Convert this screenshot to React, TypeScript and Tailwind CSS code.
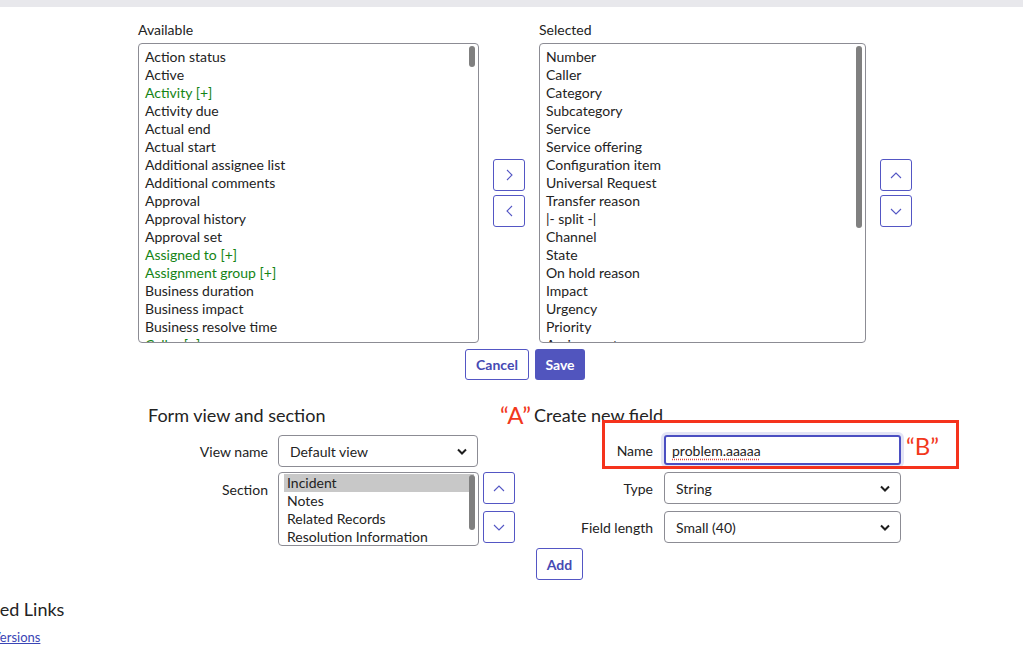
import React from "react";

type Item = { label: string; ref?: boolean };

const available: Item[] = [
  { label: "Action status" },
  { label: "Active" },
  { label: "Activity [+]", ref: true },
  { label: "Activity due" },
  { label: "Actual end" },
  { label: "Actual start" },
  { label: "Additional assignee list" },
  { label: "Additional comments" },
  { label: "Approval" },
  { label: "Approval history" },
  { label: "Approval set" },
  { label: "Assigned to [+]", ref: true },
  { label: "Assignment group [+]", ref: true },
  { label: "Business duration" },
  { label: "Business impact" },
  { label: "Business resolve time" },
  { label: "Caller [+]", ref: true },
];

const selected: Item[] = [
  { label: "Number" },
  { label: "Caller" },
  { label: "Category" },
  { label: "Subcategory" },
  { label: "Service" },
  { label: "Service offering" },
  { label: "Configuration item" },
  { label: "Universal Request" },
  { label: "Transfer reason" },
  { label: "|- split -|" },
  { label: "Channel" },
  { label: "State" },
  { label: "On hold reason" },
  { label: "Impact" },
  { label: "Urgency" },
  { label: "Priority" },
  { label: "Assignment group" },
];

const sections = ["Incident", "Notes", "Related Records", "Resolution Information"];

function Chevron({ dir }: { dir: "up" | "down" | "left" | "right" }) {
  const pts = {
    up: "1,7 6,2 11,7",
    down: "1,2 6,7 11,2",
    left: "7,1 2,6 7,11",
    right: "2,1 7,6 2,11",
  }[dir];
  const vertical = dir === "up" || dir === "down";
  return (
    <svg
      width={vertical ? 12 : 9}
      height={vertical ? 9 : 12}
      viewBox={vertical ? "0 0 12 9" : "0 0 9 12"}
      fill="none"
      stroke="#5356c4"
      strokeWidth="1.1"
    >
      <polyline points={pts} />
    </svg>
  );
}

function IconButton({ dir }: { dir: "up" | "down" | "left" | "right" }) {
  return (
    <button className="w-8 h-8 shrink-0 flex items-center justify-center border border-[#5356c4] rounded-[3px] bg-white">
      <Chevron dir={dir} />
    </button>
  );
}

function SelectBox({ value, width }: { value: string; width: string }) {
  return (
    <div
      className={`${width} h-8 shrink-0 flex items-center justify-between pl-[11px] pr-[10px] border border-[#8c8c94] rounded-[4px] bg-white text-[14px] text-[#232323]`}
    >
      <span>{value}</span>
      <svg width="10" height="7" viewBox="0 0 10 7" fill="none" stroke="#1e1e1e" strokeWidth="2">
        <polyline points="1,1.5 5,5.5 9,1.5" />
      </svg>
    </div>
  );
}

function ListBox({
  items,
  width,
  thumb,
}: {
  items: Item[];
  width: string;
  thumb: string;
}) {
  return (
    <div className={`relative ${width} h-[300px] overflow-hidden border border-[#8c8c94] rounded-[4px] bg-white pt-[4px] pl-[6px]`}>
      {items.map((it) => (
        <div
          key={it.label}
          className={`h-[18px] leading-[18px] text-[14px] whitespace-nowrap ${it.ref ? "text-[#148414]" : "text-[#232323]"}`}
        >
          {it.label}
        </div>
      ))}
      <div className={`absolute right-[3px] top-[2px] w-[6px] ${thumb} rounded-full bg-[#808080]`} />
    </div>
  );
}

export default function App() {
  return (
    <div className="relative w-[1023px] h-[645px] overflow-hidden bg-white font-['Lato',sans-serif] text-[#232323]">
      <div className="h-[7px] bg-[#e8e8ec]" />

      {/* Column picker */}
      <div className="flex gap-[14px] pl-[138px] pt-[13px]">
        <div>
          <div className="h-5 leading-5 mb-[3px] text-[14px]">Available</div>
          <ListBox items={available} width="w-[341px]" thumb="h-[21px]" />
        </div>
        <div className="self-end h-[300px] flex flex-col justify-center gap-1">
          <IconButton dir="right" />
          <IconButton dir="left" />
        </div>
        <div>
          <div className="h-5 leading-5 mb-[3px] text-[14px]">Selected</div>
          <ListBox items={selected} width="w-[327px]" thumb="h-[182px]" />
        </div>
        <div className="self-end h-[300px] flex flex-col justify-center gap-1">
          <IconButton dir="up" />
          <IconButton dir="down" />
        </div>
      </div>

      <div className="ml-[138px] w-[774px] mt-[6px] flex justify-center gap-[6px]">
        <button className="w-16 h-[31px] border border-[#5356c4] rounded-[3px] text-[14px] font-bold text-[#4649b3] bg-white">
          Cancel
        </button>
        <button className="w-[50px] h-[31px] rounded-[3px] text-[14px] font-bold text-white bg-[#5155be]">
          Save
        </button>
      </div>

      {/* Form view / new field */}
      <div className="flex pl-[148px] mt-[23px]">
        <div className="w-[352px] shrink-0">
          <h2 className="h-6 leading-6 text-[18px]">Form view and section</h2>
          <div className="mt-[8px] flex items-center gap-[10px]">
            <div className="w-[120px] shrink-0 text-right text-[14px]">View name</div>
            <SelectBox value="Default view" width="w-[200px]" />
          </div>
          <div className="mt-[5px] flex items-start gap-[10px]">
            <div className="w-[120px] shrink-0 pt-[7px] text-right text-[14px]">Section</div>
            <div className="relative w-[201px] h-[74px] shrink-0 overflow-hidden border border-[#8c8c94] rounded-[4px] bg-white pt-[1px] pl-[5px] pr-[4px]">
              {sections.map((s, i) => (
                <div
                  key={s}
                  className={`h-[18px] leading-[18px] pl-[3px] text-[14px] whitespace-nowrap ${i === 0 ? "bg-[#c8c8c8]" : ""}`}
                >
                  {s}
                </div>
              ))}
              <div className="absolute right-[3px] top-[2px] w-[6px] h-[55px] rounded-full bg-[#808080]" />
            </div>
            <div className="ml-[-6px] shrink-0 flex flex-col gap-[7px]">
              <IconButton dir="up" />
              <IconButton dir="down" />
            </div>
          </div>
        </div>

        <div>
          <h2 className="h-6 flex items-center text-[18px] whitespace-nowrap">
            <span className="text-[24px] text-[#f2381c] mr-[3px]">“A”</span>
            Create new field
          </h2>
          <div className="mt-[8px] flex items-center gap-[11px]">
            <div className="w-[153px] text-right text-[14px]">Name</div>
            <div className="w-[237px] h-[30px] flex items-center pl-[6px] border-2 border-[#4b4fc2] rounded-[3px] ring-[3px] ring-[#e3e4f5] text-[14px]">
              <span className="underline decoration-dotted decoration-[#e0443a] underline-offset-[3px]">problem.aaaaa</span>
            </div>
          </div>
          <div className="mt-[7px] flex items-center gap-[11px]">
            <div className="w-[153px] text-right text-[14px]">Type</div>
            <SelectBox value="String" width="w-[237px]" />
          </div>
          <div className="mt-[7px] flex items-center gap-[11px]">
            <div className="w-[153px] text-right text-[14px]">Field length</div>
            <SelectBox value="Small (40)" width="w-[237px]" />
          </div>
          <button className="mt-[5px] ml-[36px] w-[47px] h-8 border border-[#5356c4] rounded-[3px] text-[14px] font-bold text-[#4649b3] bg-white">
            Add
          </button>
        </div>
      </div>

      {/* Related links */}
      <h2 className="mt-[17px] ml-[-40px] h-6 leading-6 text-[18px] whitespace-nowrap">Related Links</h2>
      <a href="#" className="block mt-[8px] ml-[-8px] text-[13px] leading-4 text-[#3a45b5] underline">
        Versions
      </a>

      {/* Callout around the name field */}
      <div className="absolute left-[602px] top-[420px] w-[357px] h-[49px] border-[3px] border-[#f5331c]" />
      <div className="absolute left-[906px] top-[430px] text-[24px] leading-8 text-[#f2381c]">“B”</div>
    </div>
  );
}
